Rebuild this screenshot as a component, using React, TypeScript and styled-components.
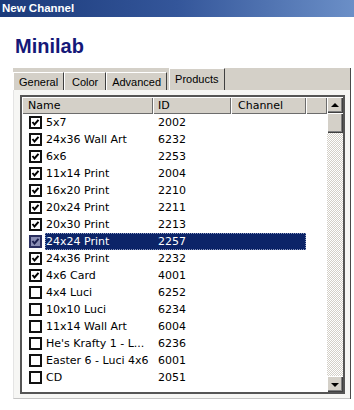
import React from "react";
import styled, { createGlobalStyle } from "styled-components";

const GlobalStyle = createGlobalStyle`
  html, body {
    margin: 0;
    padding: 0;
    background: #fff;
  }
  body {
    width: 354px;
    height: 410px;
    overflow: hidden;
    font-family: "Liberation Sans", Arial, sans-serif;
  }
`;

const products = [
  { name: "5x7", id: "2002", checked: true },
  { name: "24x36 Wall Art", id: "6232", checked: true },
  { name: "6x6", id: "2253", checked: true },
  { name: "11x14 Print", id: "2004", checked: true },
  { name: "16x20 Print", id: "2210", checked: true },
  { name: "20x24 Print", id: "2211", checked: true },
  { name: "20x30 Print", id: "2213", checked: true },
  { name: "24x24 Print", id: "2257", checked: true, selected: true },
  { name: "24x36 Print", id: "2232", checked: true },
  { name: "4x6 Card", id: "4001", checked: true },
  { name: "4x4 Luci", id: "6252", checked: false },
  { name: "10x10 Luci", id: "6234", checked: false },
  { name: "11x14 Wall Art", id: "6004", checked: false },
  { name: "He's Krafty 1 - L...", id: "6236", checked: false },
  { name: "Easter 6 - Luci 4x6", id: "6001", checked: false },
  { name: "CD", id: "2051", checked: false },
];

const tabs = ["General", "Color", "Advanced", "Products"];

const Window = styled.div`
  width: 354px;
  height: 410px;
  display: flex;
  flex-direction: column;
  background: #fff;
`;

const TitleBar = styled.div`
  height: 17px;
  line-height: 17px;
  padding-left: 2px;
  background: linear-gradient(to right, #1b3a7a 0%, #34569a 50%, #6b8fc7 100%);
  color: #fff;
  font-family: "Liberation Sans", Arial, sans-serif;
  font-size: 11.5px;
  font-weight: 700;
`;

const Heading = styled.h1`
  margin: 18px 0 11px 15px;
  font: bold 20px/22px "Liberation Sans", Arial, sans-serif;
  color: #151878;
`;

const TabControl = styled.div`
  margin-left: 13px;
  width: 337px;
  display: flex;
  flex-direction: column;
  border-right: 1px solid #4a4a4a;
`;

const TabStrip = styled.div`
  height: 22px;
  display: flex;
  align-items: flex-end;
  background: #d4d0c8;
`;

const Tab = styled.div<{ $active?: boolean }>`
  height: ${(p) => (p.$active ? 22 : 18)}px;
  line-height: ${(p) => (p.$active ? 21 : 18)}px;
  margin-left: ${(p) => (p.$active ? 2 : 0)}px;
  min-width: 42px;
  padding: 0 5px;
  box-sizing: border-box;
  text-align: center;
  background: #d4d0c8;
  border-left: 1px solid #fff;
  border-top: 1px solid #fff;
  border-right: 1px solid #404040;
  font-size: 11px;
  color: #000;
`;

const Page = styled.div`
  height: 309px;
  padding: 5px 5px 5px 6px;
  box-sizing: border-box;
  background: #f6f6f4;
  border-left: 1px solid #e4e4e4;
  border-bottom: 1px solid #c4c4c4;
`;

const ListFrame = styled.div`
  width: 325px;
  height: 299px;
  box-sizing: border-box;
  border: 2px solid #555;
  display: flex;
  background: #fff;
  font: 11px "DejaVu Sans", Verdana, sans-serif;
  color: #000;
`;

const Columns = styled.div`
  flex: 1;
  display: flex;
  flex-direction: column;
  overflow: hidden;
`;

const HeaderRow = styled.div`
  height: 17px;
  display: grid;
  grid-template-columns: 131px 78px 75px 1fr;
`;

const HeaderCell = styled.div<{ $pad: number }>`
  background: #d4d0c8;
  box-shadow: inset 1px 1px 0 #fff, inset -1px -1px 0 #6c6c6c;
  padding-left: ${(p) => p.$pad}px;
  line-height: 17px;
  white-space: nowrap;
`;

const Row = styled.div`
  height: 17px;
  display: flex;
  align-items: center;
`;

const CheckCell = styled.div`
  width: 23px;
  padding-left: 7px;
  box-sizing: border-box;
  display: flex;
  align-items: center;
`;

const Selection = styled.div<{ $selected?: boolean }>`
  height: 17px;
  display: grid;
  grid-template-columns: 108px 78px 75px;
  line-height: 17px;
  background: ${(p) => (p.$selected ? "#0c2468" : "transparent")};
  color: ${(p) => (p.$selected ? "#fff" : "#000")};
  outline: ${(p) => (p.$selected ? "1px dotted #8f9bc0" : "none")};
  outline-offset: -1px;
`;

const Cell = styled.div<{ $pad: number }>`
  padding-left: ${(p) => p.$pad}px;
  white-space: nowrap;
  overflow: hidden;
`;

const ScrollBar = styled.div`
  width: 16px;
  display: flex;
  flex-direction: column;
`;

const Raised = styled.div<{ $h: number }>`
  height: ${(p) => p.$h}px;
  flex: none;
  background: #d4d0c8;
  box-shadow: inset 1px 1px 0 #fff, inset -1px -1px 0 #404040, inset -2px -2px 0 #808080;
  display: flex;
  align-items: center;
  justify-content: center;
`;

const Track = styled.div`
  flex: 1;
  background: repeating-conic-gradient(#d4d0c8 0 25%, #fff 0 50%) 0 0 / 2px 2px;
`;

const Arrow = styled.div<{ $down?: boolean }>`
  width: 0;
  height: 0;
  border-left: 4px solid transparent;
  border-right: 4px solid transparent;
  ${(p) => (p.$down ? "border-top: 4px solid #000;" : "border-bottom: 4px solid #000;")}
  margin-top: ${(p) => (p.$down ? 1 : -1)}px;
`;

function CheckBox({ checked, selected }: { checked: boolean; selected?: boolean }) {
  return (
    <svg width="13" height="13" viewBox="0 0 13 13" shapeRendering="crispEdges">
      <rect
        x="1"
        y="1"
        width="11"
        height="11"
        fill={selected ? "#8a8eb4" : "#fff"}
        stroke={selected ? "#2a2e5e" : "#111"}
        strokeWidth="2"
      />
      {checked && (
        <path
          d="M3.5 6 L5.5 8.5 L9.5 3.8"
          fill="none"
          stroke={selected ? "#1c2050" : "#000"}
          strokeWidth="2"
          shapeRendering="geometricPrecision"
        />
      )}
    </svg>
  );
}

export default function App() {
  return (
    <Window>
      <GlobalStyle />
      <TitleBar>New Channel</TitleBar>
      <Heading>Minilab</Heading>
      <TabControl>
        <TabStrip>
          {tabs.map((t) => (
            <Tab key={t} $active={t === "Products"}>
              {t}
            </Tab>
          ))}
        </TabStrip>
        <Page>
          <ListFrame>
            <Columns>
              <HeaderRow>
                <HeaderCell $pad={6}>Name</HeaderCell>
                <HeaderCell $pad={5}>ID</HeaderCell>
                <HeaderCell $pad={7}>Channel</HeaderCell>
                <HeaderCell $pad={0} />
              </HeaderRow>
              {products.map((p) => (
                <Row key={p.name}>
                  <CheckCell>
                    <CheckBox checked={p.checked} selected={p.selected} />
                  </CheckCell>
                  <Selection $selected={p.selected}>
                    <Cell $pad={1}>{p.name}</Cell>
                    <Cell $pad={5}>{p.id}</Cell>
                    <Cell $pad={0} />
                  </Selection>
                </Row>
              ))}
            </Columns>
            <ScrollBar>
              <Raised $h={16}>
                <Arrow />
              </Raised>
              <Raised $h={20} />
              <Track />
              <Raised $h={16}>
                <Arrow $down />
              </Raised>
            </ScrollBar>
          </ListFrame>
        </Page>
      </TabControl>
    </Window>
  );
}
